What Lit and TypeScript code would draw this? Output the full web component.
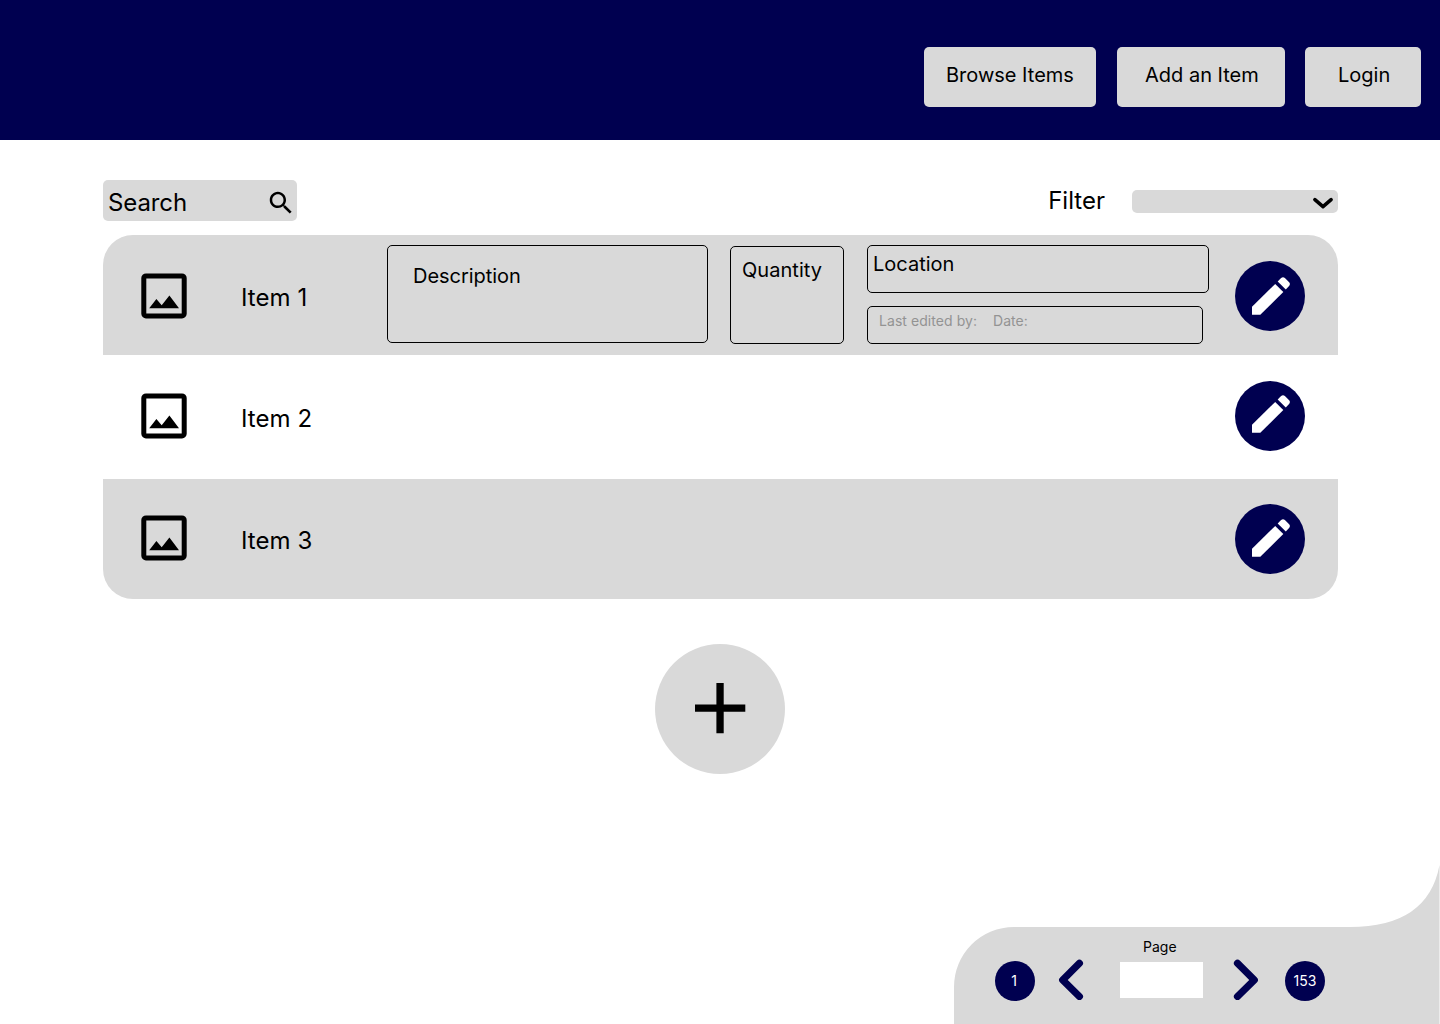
import { LitElement, html, css, svg, nothing } from "lit";
import { customElement, property } from "lit/decorators.js";

const NAVY = css`#000050`;

@customElement("item-row")
class ItemRow extends LitElement {
  @property() name = "";
  @property({ type: Boolean }) detailed = false;

  static styles = css`
    :host {
      display: flex;
      align-items: flex-start;
      box-sizing: border-box;
      padding: 0 33px 0 38px;
    }
    .thumb {
      display: block;
      flex: none;
      width: 46px;
      height: 46px;
      margin-top: var(--thumb-top, 38px);
    }
    .name {
      width: 146px;
      margin: var(--name-top, 48px) 0 0 54px;
      font-size: 24px;
      line-height: 29px;
      letter-spacing: 0.06px;
      white-space: nowrap;
    }
    .fields {
      display: flex;
      flex: 1;
      align-items: flex-start;
      padding-top: 10px;
    }
    .field {
      box-sizing: border-box;
      border: 1px solid #000;
      border-radius: 5px;
      font-size: 20px;
      line-height: 24px;
    }
    .description {
      width: 321px;
      height: 98px;
      padding: 18px 25px;
      letter-spacing: -0.04px;
    }
    .quantity {
      width: 114px;
      height: 98px;
      margin: 1px 0 0 22px;
      padding: 11px 11px;
      letter-spacing: 0.05px;
    }
    .stack {
      display: flex;
      flex-direction: column;
      gap: 13px;
      margin-left: 23px;
    }
    .location {
      width: 342px;
      height: 48px;
      padding: 6px 5px;
    }
    .edited {
      display: flex;
      gap: 16px;
      width: 336px;
      height: 38px;
      padding: 5px 11px;
      font-size: 14px;
      line-height: 17px;
      letter-spacing: 0.06px;
      color: #939393;
    }
    .edit {
      display: flex;
      flex: none;
      align-items: flex-start;
      width: 70px;
      height: 70px;
      margin: var(--edit-top, 26px) 0 0 auto;
      padding: 0;
      border: 0;
      border-radius: 50%;
      background: ${NAVY};
    }
    .edit svg {
      display: block;
      margin: var(--pencil-top, 16px) 0 0 17px;
    }
  `;

  render() {
    return html`
      <svg class="thumb" viewBox="0 0 46 46">
        <path
          fill-rule="evenodd"
          d="M5 .4H41A4.700 4.700 0 0 1 45.700 5.100V40.700A4.700 4.700 0 0 1 41 45.400H5A4.700 4.700 0 0 1 .3 40.700V5.100A4.700 4.700 0 0 1 5 .4ZM5.300 5.400V40.400H40.700V5.400Z"
        />
        <path d="M8.200 35.200 15.400 26.100 20.700 32.300 28.400 22.600 38 35.200Z" />
      </svg>
      <div class="name">${this.name}</div>
      <div class="fields">
        ${this.detailed
          ? html`
              <div class="field description">Description</div>
              <div class="field quantity">Quantity</div>
              <div class="stack">
                <div class="field location">Location</div>
                <div class="field edited">
                  <span>Last edited by:</span><span>Date:</span>
                </div>
              </div>
            `
          : nothing}
      </div>
      <button class="edit" aria-label="Edit">
        <svg width="38" height="38" viewBox="0 0 38 38" fill="#fff">
          <path d="M0 29.800V37.800H8.300L31.300 14.900 23.200 6.900Z" />
          <path
            d="M25.700 4.500 29.100 1.100Q31 -.7 32.900 1.100L37.100 5.300Q38.700 7 37.100 8.900L33.800 12.400Z"
          />
        </svg>
      </button>
    `;
  }
}

@customElement("page-bar")
class PageBar extends LitElement {
  static styles = css`
    :host {
      display: grid;
      width: 486px;
      height: 160px;
    }
    .shape,
    .controls {
      grid-area: 1 / 1;
    }
    .shape {
      display: block;
    }
    .controls {
      display: flex;
      align-items: flex-start;
      padding: 74px 0 0 41px;
    }
    .dot {
      box-sizing: border-box;
      width: 40px;
      height: 40px;
      margin-top: 23px;
      border-radius: 50%;
      background: ${NAVY};
      color: #fff;
      font-size: 14px;
      line-height: 40px;
      text-align: center;
    }
    .first {
      padding-right: 2px;
    }
    .arrow {
      display: block;
      width: 26px;
      height: 42px;
      margin-top: 20px;
    }
    .prev {
      margin-left: 23px;
    }
    .next {
      margin-left: 30px;
    }
    .last {
      margin-left: 26px;
    }
    .page {
      display: flex;
      flex-direction: column;
      width: 83px;
      margin-left: 36px;
      font-size: 14px;
      line-height: 17px;
    }
    .page label {
      padding-left: 23px;
    }
    .box {
      height: 36px;
      margin-top: 7px;
      background: #fff;
    }
  `;

  render() {
    const arrow = (d: string) => svg`<path d=${d} fill="none" stroke="#000050"
      stroke-width="7.200" stroke-linecap="round" stroke-linejoin="round" />`;
    return html`
      <svg class="shape" width="486" height="160" viewBox="0 0 486 160">
        <path
          fill="#d9d9d9"
          d="M0 123A60 60 0 0 1 60 63H396Q474 63 485.500 1V160H0Z"
        />
      </svg>
      <div class="controls">
        <div class="dot first">1</div>
        <svg class="arrow prev" viewBox="0 0 26 42">
          ${arrow("M21.400 5.300 4.700 22 21.400 38.500")}
        </svg>
        <div class="page">
          <label>Page</label>
          <div class="box"></div>
        </div>
        <svg class="arrow next" viewBox="0 0 26 42">
          ${arrow("M4.500 5.300 21.300 22 4.500 38.500")}
        </svg>
        <div class="dot last">153</div>
      </div>
    `;
  }
}

@customElement("app-root")
class AppRoot extends LitElement {
  static styles = css`
    :host {
      display: flex;
      flex-direction: column;
      width: 1440px;
      height: 1024px;
      overflow: hidden;
      background: #fff;
      color: #000;
      font-family: Inter, "Liberation Sans", sans-serif;
    }
    header {
      display: flex;
      flex: none;
      justify-content: flex-end;
      box-sizing: border-box;
      height: 140px;
      padding: 47px 19px 0 0;
      background: ${NAVY};
    }
    .nav {
      box-sizing: border-box;
      height: 60px;
      padding-top: 16px;
      border-radius: 5px;
      background: #d9d9d9;
      font-size: 20px;
      line-height: 24px;
      white-space: nowrap;
    }
    .browse {
      width: 172px;
      padding-left: 22px;
    }
    .add {
      width: 168px;
      margin-left: 21px;
      padding-left: 28px;
    }
    .login {
      width: 116px;
      margin-left: 20px;
      padding-left: 33px;
    }
    main {
      display: flex;
      flex: 1;
      flex-direction: column;
      padding: 40px 102px 0 103px;
    }
    .tools {
      display: flex;
      align-items: flex-start;
      justify-content: space-between;
      height: 55px;
      font-size: 24px;
      line-height: 29px;
    }
    .search {
      display: flex;
      align-items: flex-start;
      justify-content: space-between;
      box-sizing: border-box;
      width: 194px;
      height: 41px;
      padding: 8px 1px 0 5px;
      border-radius: 5px;
      background: #d9d9d9;
      letter-spacing: -0.1px;
    }
    .search svg {
      display: block;
    }
    .filter {
      display: flex;
      align-items: flex-start;
      gap: 27px;
      padding-top: 6px;
    }
    .select {
      display: flex;
      justify-content: flex-end;
      width: 206px;
      height: 23px;
      margin-top: 4px;
      border-radius: 5px;
      background: #d9d9d9;
    }
    .row {
      height: 120px;
      background: #d9d9d9;
    }
    .first {
      border-radius: 30px 30px 0 0;
    }
    .middle {
      height: 124px;
      background: #fff;
      --name-top: 49px;
      --pencil-top: 14px;
    }
    .last {
      border-radius: 0 0 30px 30px;
      --thumb-top: 36px;
      --name-top: 47px;
      --edit-top: 25px;
      --pencil-top: 15px;
    }
    .plus {
      display: block;
      width: 130px;
      height: 130px;
      margin: 45px 0 0 552px;
    }
    page-bar {
      flex: none;
      align-self: flex-end;
    }
  `;

  render() {
    return html`
      <header>
        <div class="nav browse">Browse Items</div>
        <div class="nav add">Add an Item</div>
        <div class="nav login">Login</div>
      </header>
      <main>
        <div class="tools">
          <div class="search">
            <span>Search</span>
            <svg width="30" height="30" viewBox="0 0 24 24">
              <path
                d="M15.500 14h-.79l-.28-.27C15.410 12.590 16 11.110 16 9.500 16 5.910 13.090 3 9.500 3S3 5.910 3 9.500 5.910 16 9.500 16c1.610 0 3.090-.59 4.230-1.570l.27.28v.79l5 4.990L20.490 19l-4.990-5zm-6 0C7.010 14 5 11.990 5 9.500S7.010 5 9.500 5 14 7.010 14 9.500 11.990 14 9.500 14z"
              />
            </svg>
          </div>
          <div class="filter">
            <span>Filter</span>
            <div class="select">
              <svg width="26" height="23" viewBox="0 0 26 23">
                <path
                  d="M2.900 9.700 11 16.700 19.100 9.700"
                  fill="none"
                  stroke="#000"
                  stroke-width="3.600"
                  stroke-linecap="round"
                  stroke-linejoin="round"
                />
              </svg>
            </div>
          </div>
        </div>
        <item-row class="row first" name="Item 1" detailed></item-row>
        <item-row class="row middle" name="Item 2"></item-row>
        <item-row class="row last" name="Item 3"></item-row>
        <svg class="plus" viewBox="0 0 130 130">
          <circle cx="65" cy="65" r="65" fill="#d9d9d9" />
          <path d="M40 60.400H61.400V39H68.700V60.400H90.300V67.700H68.700V89.300H61.400V67.700H40Z" />
        </svg>
      </main>
      <page-bar></page-bar>
    `;
  }
}
